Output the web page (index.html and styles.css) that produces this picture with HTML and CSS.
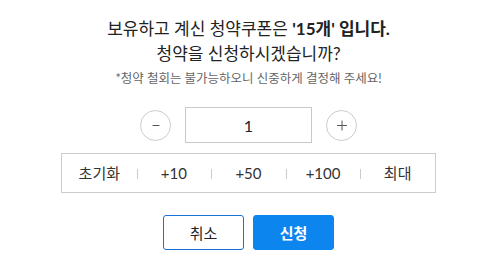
FILE: index.html
```html
<!DOCTYPE html>
<html lang="ko">
<head>
<meta charset="utf-8">
<link rel="stylesheet" href="styles.css">
</head>
<body>
<div class="dialog">
  <p class="title">보유하고 계신 청약쿠폰은 <b>'15개' 입니다.</b></p>
  <p class="title">청약을 신청하시겠습니까?</p>
  <p class="note">*청약 철회는 불가능하오니 신중하게 결정해 주세요!</p>
  <div class="stepper">
    <button class="circle" type="button">
      <svg width="10" height="10" viewBox="0 0 10 10"><path d="M1.5 5.5h7" stroke="#555" stroke-width="1"/></svg>
    </button>
    <div class="qty">1</div>
    <button class="circle" type="button">
      <svg width="12" height="12" viewBox="0 0 12 12"><path d="M1 6.5h10M6 1.5v10" stroke="#555" stroke-width="1"/></svg>
    </button>
  </div>
  <div class="quick">
    <span class="cell">초기화</span>
    <span class="cell">+10</span>
    <span class="cell">+50</span>
    <span class="cell">+100</span>
    <span class="cell">최대</span>
  </div>
  <div class="actions">
    <button class="btn cancel" type="button">취소</button>
    <button class="btn submit" type="button">신청</button>
  </div>
</div>
</body>
</html>
```
FILE: styles.css
```css
html, body {
  margin: 0;
  padding: 0;
  background: #fff;
}
body {
  font-family: Lato, "Noto Sans CJK KR", sans-serif;
  color: #222;
}
.dialog {
  width: 497px;
  padding-top: 16px;
  display: flex;
  flex-direction: column;
  align-items: center;
}
.title {
  margin: 0;
  font-size: 17px;
  line-height: 25px;
  color: #222;
  text-align: center;
}
.title b {
  font-weight: 700;
}
.note {
  margin: 3px 0 0;
  font-size: 12.5px;
  line-height: 20px;
  color: #666;
}
.stepper {
  margin-top: 18px;
  display: flex;
  align-items: center;
  gap: 14px;
}
.circle {
  width: 31px;
  height: 31px;
  border: 1px solid #ccc;
  border-radius: 50%;
  background: #fff;
  padding: 0;
  display: flex;
  align-items: center;
  justify-content: center;
}
.qty {
  width: 125px;
  height: 34px;
  border: 1px solid #c8c8c8;
  display: flex;
  align-items: center;
  justify-content: center;
  font-size: 16px;
  color: #222;
}
.quick {
  margin-top: 10px;
  width: 373px;
  height: 38px;
  border: 1px solid #ccc;
  display: flex;
  align-items: center;
}
.cell {
  flex: 1;
  text-align: center;
  font-size: 15px;
  line-height: 20px;
  color: #333;
  position: relative;
}
.cell + .cell::before {
  content: "";
  position: absolute;
  left: 0;
  top: 6px;
  height: 10px;
  border-left: 1px solid #ccc;
}
.actions {
  margin-top: 22px;
  display: flex;
  gap: 9px;
}
.btn {
  width: 81px;
  height: 35px;
  border-radius: 3px;
  font-family: Lato, "Noto Sans CJK KR", sans-serif;
  font-size: 15px;
  padding: 0;
}
.cancel {
  background: #fff;
  border: 1px solid #1a6fd8;
  color: #222;
  font-weight: 400;
}
.submit {
  background: #0c86ee;
  border: 1px solid #0c86ee;
  color: #fff;
  font-weight: 700;
}
```
